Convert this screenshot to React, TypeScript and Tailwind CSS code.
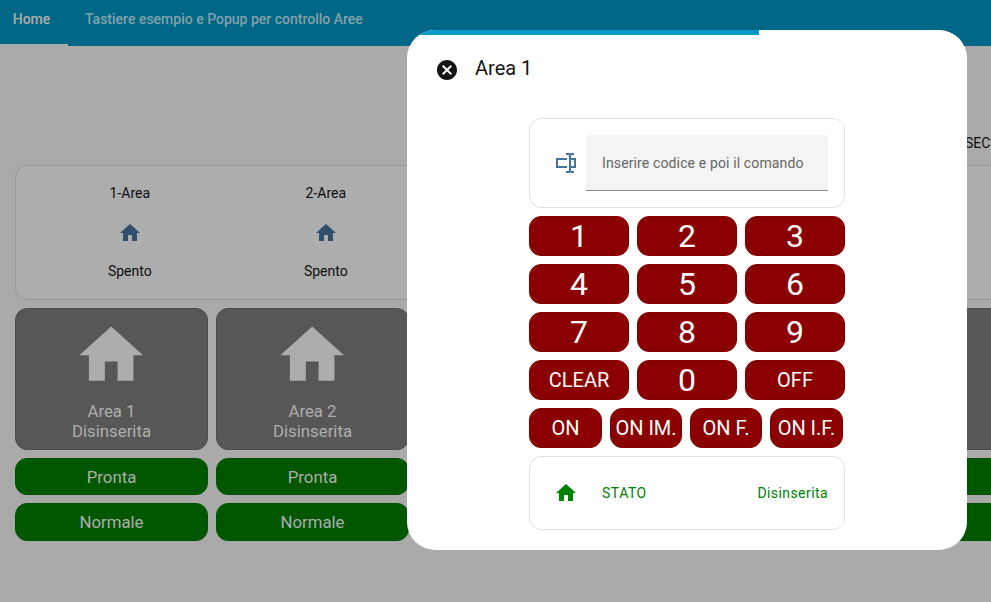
import React from "react";

const HOME = "M10,20V14H14V20H19V12H22L12,3L2,12H5V20H10Z";
const TEXTBOX =
  "M17,7H22V17H17V19A1,1 0 0,0 18,20H20V22H17.5C16.95,22 16,21.55 16,21C16,21.55 15.05,22 14.5,22H12V20H14A1,1 0 0,0 15,19V5A1,1 0 0,0 14,4H12V2H14.5C15.05,2 16,2.45 16,3C16,2.45 16.95,2 17.5,2H20V4H18A1,1 0 0,0 17,5V7M2,7H13V9H4V15H13V17H2V7M20,15V9H17V15H20Z";
const CLOSE =
  "M12,2C17.53,2 22,6.47 22,12C22,17.53 17.53,22 12,22C6.47,22 2,17.53 2,12C2,6.47 6.47,2 12,2M15.59,7L12,10.59L8.41,7L7,8.41L10.59,12L7,15.59L8.41,17L12,13.41L15.59,17L17,15.59L13.41,12L17,8.41L15.59,7Z";

function Icon({ d, className }: { d: string; className: string }) {
  return (
    <svg viewBox="0 0 24 24" fill="currentColor" className={className}>
      <path d={d} />
    </svg>
  );
}

const areas = [1, 2];
const panels = [1, 2, 3, 4, 5];
const digits = ["1", "2", "3", "4", "5", "6", "7", "8", "9"];

const key = "flex h-10 items-center justify-center rounded-xl border border-[#7c0000] bg-[#8b0000] text-white";

function Status({ label, className }: { label: string; className: string }) {
  return (
    <div
      className={`flex items-center justify-center rounded-xl border border-[#005000] bg-[#005700] pt-0.5 text-[16.8px] text-[#adadad] ${className}`}
    >
      {label}
    </div>
  );
}

function Dashboard() {
  return (
    <div className="h-full w-full">
      <header className="flex h-[46px] bg-[#006787] text-sm font-medium">
        <div className="flex h-full w-[68px] items-center justify-center border-b-2 border-[#aaaaaa] pt-px pb-[7px] pr-[5px] text-[#adadad]">
          Home
        </div>
        <div className="flex items-center pb-[8px] pl-[17px] text-[#83a1ab]">
          Tastiere esempio e Popup per controllo Aree
        </div>
      </header>
      <main className="w-[1029px] pl-[15px]">
        <div className="flex h-[119px] items-end pb-[11px] pl-[950px] text-sm leading-[22px] text-[#0e0e0e]">SEC</div>
        <section className="grid h-[135px] grid-cols-5 rounded-xl border border-[#999999] bg-[#adadad] pr-[16.2px] pl-[15.8px] text-sm text-[#0e0e0e]">
          {areas.map((n) => (
            <div key={n} className="flex flex-col items-center pt-[17px]">
              <span className="leading-5">{n}-Area</span>
              <Icon d={HOME} className="mt-[18px] size-6 text-[#2f4f6d]" />
              <span className="mt-4 leading-5">Spento</span>
            </div>
          ))}
        </section>
        <section className="mt-2 grid w-[997px] grid-cols-5 gap-2">
          {panels.map((n) => (
            <div key={n} className="flex flex-col gap-2">
              <div className="flex h-[142px] flex-col items-center rounded-xl border border-[#4c4c4c] bg-[#575757] pt-2 text-[16.8px] leading-5 text-[#adadad]">
                {areas.includes(n) && (
                  <>
                    <Icon d={HOME} className="mr-px size-[76.4px]" />
                    <span className="mt-[7.6px]">Area {n}</span>
                    <span>Disinserita</span>
                  </>
                )}
              </div>
              <Status label={areas.includes(n) ? "Pronta" : ""} className="h-[37px]" />
              <Status label={areas.includes(n) ? "Normale" : ""} className="h-[38px]" />
            </div>
          ))}
        </section>
      </main>
    </div>
  );
}

function Dialog() {
  return (
    <div className="absolute top-[30px] left-[407px] h-[520px] w-[560px] overflow-hidden rounded-[28px] bg-white text-[#141414]">
      <div className="h-[5px] w-[352px] bg-[#039ac8]" />
      <div className="flex h-[59px] items-center gap-4 pt-[7px] pl-7">
        <Icon d={CLOSE} className="mt-[3px] size-6" />
        <h1 className="text-xl leading-7">Area 1</h1>
      </div>
      <div className="mx-auto mt-6 flex w-[316px] flex-col gap-2">
        <div className="flex h-[90px] items-center rounded-xl border border-[#e0e0e0] pr-4 pl-6">
          <Icon d={TEXTBOX} className="size-6 shrink-0 text-[#44739e]" />
          <div className="ml-2 flex h-14 flex-1 items-center rounded-t border-b border-[#8a8a8a] bg-[#f4f4f4] pl-4 text-sm tracking-[0.13px] whitespace-nowrap text-[#666666]">
            Inserire codice e poi il comando
          </div>
        </div>
        <div className="grid grid-cols-3 gap-2">
          {digits.map((d) => (
            <button key={d} className={`${key} text-[32px]`}>
              {d}
            </button>
          ))}
          <button className={`${key} text-xl`}>CLEAR</button>
          <button className={`${key} text-[32px]`}>0</button>
          <button className={`${key} text-xl`}>OFF</button>
        </div>
        <div className="grid grid-cols-[73px_72px_72px_73px] gap-2 text-xl whitespace-nowrap">
          {["ON", "ON IM.", "ON F.", "ON I.F."].map((t) => (
            <button key={t} className={key}>
              {t}
            </button>
          ))}
        </div>
        <div className="flex h-[74px] items-center rounded-xl border border-[#e0e0e0] pr-4 pl-6 text-sm text-[#008000]">
          <Icon d={HOME} className="size-6" />
          <span className="ml-6 tracking-[0.5px]">STATO</span>
          <span className="ml-auto tracking-[0.42px]">Disinserita</span>
        </div>
      </div>
    </div>
  );
}

export default function App() {
  return (
    <div className="relative h-[602px] w-[991px] overflow-hidden bg-[#aaaaaa] font-[Roboto,'Noto_Sans',sans-serif]">
      <Dashboard />
      <Dialog />
    </div>
  );
}
